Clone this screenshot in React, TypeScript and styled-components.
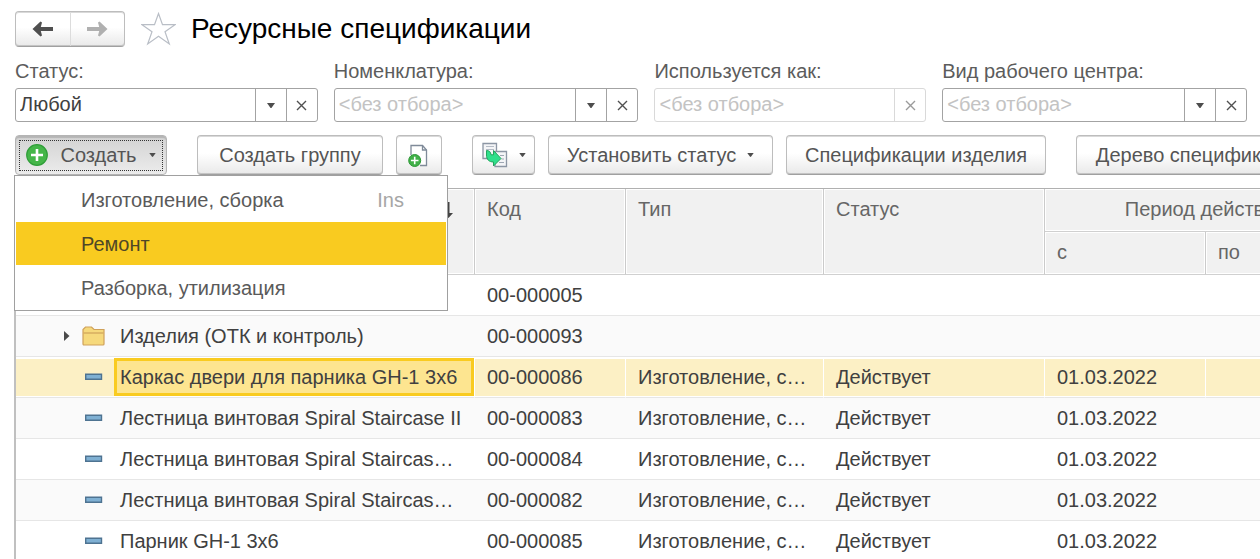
import React from 'react';
import styled, { createGlobalStyle, css } from 'styled-components';

const GlobalStyle = createGlobalStyle`
  *, *::before, *::after { box-sizing: border-box; }
  body {
    margin: 0;
    background: #fff;
    color: #4a4a4a;
    font-family: "Liberation Sans", Arial, sans-serif;
    font-size: 20px;
    line-height: 22px;
  }
  button, input, select { font: inherit; color: inherit; }
`;

const Page = styled.main`
  display: flex;
  flex-direction: column;
  height: 100vh;
  overflow: hidden;
  padding: 11px 0 0 15px;
`;

const Header = styled.header`
  display: flex;
  align-items: center;
  height: 36px;
`;

const raised = css`
  border: 1px solid #bdbdbd;
  border-bottom-color: #a0a0a0;
  border-radius: 4px;
  background: linear-gradient(#fff 0%, #fff 45%, #e9e9e9 100%);
  box-shadow: inset 0 1px 0 #d9d9d9, inset 0 -1px 0 #c4c4c4;
`;

const NavGroup = styled.nav`
  ${raised}
  display: flex;
  width: 110px;
  height: 36px;
`;

const NavButton = styled.button`
  flex: 1;
  display: flex;
  align-items: center;
  justify-content: center;
  padding: 0;
  border: 0;
  background: none;
  color: #4f4f4f;
  & + & { border-left: 1px solid #dcdcdc; }
  &:disabled { color: #b0b0b0; }
`;

const StarButton = styled.button`
  display: flex;
  margin: 0 15px 0 16px;
  padding: 0;
  border: 0;
  background: none;
`;

const Title = styled.h1`
  margin: 0;
  color: #000;
  font-size: 28px;
  line-height: 32px;
  font-weight: 400;
  white-space: nowrap;
`;

const Filters = styled.section`
  display: grid;
  grid-template-columns: 303fr 305fr 272fr 305fr;
  gap: 16px;
  margin: 14px 13px 0 0;
`;

const Field = styled.div`
  display: flex;
  flex-direction: column;
  gap: 7px;
  min-width: 0;
`;

const FieldLabel = styled.label`
  line-height: 20px;
  color: #5c5c5c;
  white-space: nowrap;
`;

const FieldBox = styled.div<{ $disabled?: boolean }>`
  --line: ${p => (p.$disabled ? '#d9d9d9' : '#a3a3a3')};
  display: grid;
  grid-template-columns: minmax(0, 1fr) ${p => (p.$disabled ? '' : '31px')} 31px;
  height: 34px;
  border: 1px solid var(--line);
  border-radius: 3px;
  background: #fff;
  color: ${p => (p.$disabled ? '#9b9b9b' : '#505050')};
`;

const FieldSelect = styled.select<{ $empty?: boolean }>`
  grid-area: 1 / 1 / 2 / 3;
  min-width: 0;
  height: 32px;
  padding: 0 35px 2px 4px;
  appearance: none;
  border: 0;
  outline: 0;
  background: none;
  color: ${p => (p.$empty ? '#c3c3c3' : '#404040')};
`;

const FieldInput = styled.input`
  min-width: 0;
  height: 32px;
  padding: 0 4px 2px;
  border: 0;
  outline: 0;
  background: none;
  &::placeholder { color: #c3c3c3; opacity: 1; }
`;

const DropMark = styled.span`
  grid-area: 1 / 2 / 2 / 3;
  display: flex;
  align-items: center;
  justify-content: center;
  border-left: 1px solid var(--line);
  pointer-events: none;
`;

const ClearButton = styled.button`
  display: flex;
  align-items: center;
  justify-content: center;
  padding: 0;
  border: 0;
  border-left: 1px solid var(--line);
  background: none;
`;

const Toolbar = styled.div`
  display: flex;
  gap: 30px;
  margin-top: 13px;
`;

const ButtonGroup = styled.div`
  position: relative;
  display: flex;
  flex: none;
  gap: 13px;
`;

const ToolButton = styled.button<{ $width: number }>`
  ${raised}
  display: flex;
  align-items: center;
  justify-content: center;
  gap: 11px;
  flex: none;
  min-width: ${p => p.$width}px;
  height: 40px;
  padding: 0;
  white-space: nowrap;
  color: #555;
`;

const CreateButton = styled(ToolButton)`
  padding: 3px;
  border-color: #b4b4b4;
  background: linear-gradient(#d2d2d2, #ececec);
  box-shadow: inset 0 2px 1px #b5b5b5;
`;

const FocusRing = styled.span`
  flex: 1;
  display: flex;
  align-items: center;
  justify-content: space-between;
  height: 31px;
  padding: 0 6px;
  border: 1px dotted #333;
`;

const Menu = styled.div`
  position: absolute;
  z-index: 2;
  top: 40px;
  left: -1px;
  display: flex;
  flex-direction: column;
  gap: 1px;
  width: 434px;
  padding: 2px 1px 1px;
  border: 1px solid #a0a0a0;
  background: #fff;
`;

const MenuItem = styled.button<{ $active?: boolean }>`
  display: flex;
  align-items: center;
  justify-content: space-between;
  height: 43px;
  padding: 0 42px 0 65px;
  border: 0;
  background: ${p => (p.$active ? '#f9cb20' : '#fff')};
  color: ${p => (p.$active ? '#4f4727' : '#5a5a5a')};
`;

const Shortcut = styled.span`
  color: #a6a6a6;
`;

const TableArea = styled.section`
  flex: 1;
  min-height: 0;
  margin: 13px 0 0 -1px;
  overflow: hidden;
  border-top: 1px solid #b0b0b0;
  border-left: 2px solid #c0c0c0;
`;

const Table = styled.table`
  width: max(100%, 1351px);
  table-layout: fixed;
  border-collapse: separate;
  border-spacing: 0;
`;

const HeadCell = styled.th<{ $center?: boolean }>`
  height: 43px;
  padding: 9px 12px 0;
  border-right: 1px solid #cbcbcb;
  border-bottom: 1px solid #d0d0d0;
  background: #f1f1f1;
  box-shadow: inset 0 0 0 1px #fff;
  color: #666;
  font-weight: 400;
  text-align: ${p => (p.$center ? 'center' : 'left')};
  vertical-align: top;
  white-space: nowrap;
`;

const SortMark = styled.span`
  display: flex;
  align-items: center;
  justify-content: flex-end;
  height: 24px;
  padding-right: 8px;
`;

const Cell = styled.td`
  height: 41px;
  padding: 0 12px;
  border-bottom: 1px solid #e6e6e6;
  color: #404040;
  overflow: hidden;
  text-overflow: ellipsis;
  white-space: nowrap;
`;

const NameCell = styled(Cell)`
  padding: 0;
`;

const Row = styled.tr<{ $selected?: boolean }>`
  &:nth-child(even) { background: #fafafa; }
  ${p => p.$selected && css`
    && { background: #fcf0c5; }
    ${Cell} {
      border-right: 1px solid #fff;
      box-shadow: inset 0 2px 0 #fff, inset 0 -1px 0 #fff;
    }
  `}
`;

const NameLine = styled.div`
  display: flex;
  align-items: center;
`;

const Marker = styled.span`
  flex: none;
  display: flex;
  align-items: center;
  justify-content: flex-end;
  gap: 12px;
  width: 98px;
  padding-right: 9px;
`;

const NameText = styled.span<{ $focused?: boolean }>`
  flex: 1;
  min-width: 0;
  height: 38px;
  padding: 5px 3px 0;
  border: 3px solid ${p => (p.$focused ? '#f9cb20' : 'transparent')};
  background: ${p => (p.$focused ? '#fde590' : 'none')};
  overflow: hidden;
  text-overflow: ellipsis;
`;

const Caret = ({ small }: { small?: boolean }) => (
  <svg width={small ? 7 : 8} height={small ? 4 : 5} viewBox="0 0 8 5" aria-hidden="true">
    <path d="M0 0h8L4.8 4.4a1 1 0 0 1-1.6 0z" fill="#4d4d4d" />
  </svg>
);

const Cross = () => (
  <svg width="11" height="11" viewBox="0 0 11 11" aria-hidden="true">
    <path d="M1 1l9 9M10 1l-9 9" stroke="currentColor" strokeWidth="1.4" />
  </svg>
);

const Arrow = ({ flip }: { flip?: boolean }) => (
  <svg width="22" height="16" viewBox="0 0 22 16" aria-hidden="true">
    <path
      d="M.5 8L8.500 .5l1.500 1L8.800 6H21V10H8.800L10 14.500l-1.500 1z"
      fill="currentColor"
      transform={flip ? 'matrix(-1 0 0 1 22 0)' : undefined}
    />
  </svg>
);

const Star = () => (
  <svg width="35" height="34" viewBox="0 0 35 34" aria-hidden="true">
    <path
      d="M17.500 1.500l4 11.200H34L24 19.800l4.300 12.200-10.800-7.700-10.800 7.700L11 19.800 1 12.700h12.500z"
      fill="#fff"
      stroke="#b9bec6"
      strokeWidth="1.200"
    />
  </svg>
);

const Plus = () => (
  <svg width="22" height="22" viewBox="0 0 22 22" aria-hidden="true">
    <circle cx="11" cy="11" r="10.300" fill="#45b649" stroke="#2f9e38" strokeWidth="1.200" />
    <path d="M11 5v12M5 11h12" stroke="#fff" strokeWidth="2.600" />
  </svg>
);

const NewDoc = () => (
  <svg width="22" height="26" viewBox="0 0 22 26" aria-hidden="true">
    <path d="M3 13V3.500h11.500l4 4.500v15.500H12" fill="#fff" stroke="#7f8a99" strokeWidth="1.300" />
    <path d="M14.500 3.500V8h4" fill="none" stroke="#7f8a99" strokeWidth="1.300" />
    <circle cx="6.700" cy="18.500" r="6" fill="#41b048" stroke="#2c9836" />
    <path d="M6.700 14.700v7.600M2.900 18.500h7.600" stroke="#fff" strokeWidth="1.600" />
  </svg>
);

const CopyDoc = () => (
  <svg width="26" height="26" viewBox="0 0 26 26" aria-hidden="true">
    <path d="M1 1.500h13.500v15H1z" fill="#f4f5f7" stroke="#8c96a4" strokeWidth="1.300" />
    <path d="M4 4.500h8M4 7.500h8" stroke="#b5bcc6" />
    <path d="M13 9.500h11.500v15H13z" fill="#f4f5f7" stroke="#8c96a4" strokeWidth="1.300" />
    <path d="M18 13.500h4M19.500 17h2.500M17 20.500h5" stroke="#9ea7b3" />
    <path
      d="M4.500 8.500c2.800 0 4.200 1.500 4.500 4.300h2.500V8.500L19 16.500l-7.500 7.500V20C7 20 4.500 17.500 4.500 13z"
      fill="#2fdf8b"
      stroke="#22a45c"
    />
  </svg>
);

const Folder = () => (
  <svg width="23" height="20" viewBox="0 0 23 20" aria-hidden="true">
    <path d="M1 18V3.500L3.500 1h6L12 3.500h10V18a1 1 0 0 1-1 1H2a1 1 0 0 1-1-1z" fill="#f6d97c" stroke="#cfa15a" strokeWidth="1.200" />
    <path d="M1.500 7h20" stroke="#cfa15a" strokeWidth="1.200" />
  </svg>
);

const Expander = () => (
  <svg width="6" height="10" viewBox="0 0 6 10" aria-hidden="true">
    <path d="M0 0l5.500 5L0 10z" fill="#4a4a4a" />
  </svg>
);

const Dash = () => (
  <svg width="20" height="8" viewBox="0 0 20 8" aria-hidden="true">
    <path d="M.7 1.200h15.800v5H.7z" fill="#7fb0d3" stroke="#4e7391" strokeWidth="1.400" />
  </svg>
);

const SortArrow = () => (
  <svg width="11" height="16" viewBox="0 0 11 16" aria-hidden="true">
    <path d="M4.500 0h2v11H10L5.500 16 1 11h3.500z" fill="#444" />
  </svg>
);

type Filter = { id: string; label: string; value: string; empty?: boolean; disabled?: boolean };

const filters: Filter[] = [
  { id: 'status', label: 'Статус:', value: 'Любой' },
  { id: 'item', label: 'Номенклатура:', value: '<без отбора>', empty: true },
  { id: 'usage', label: 'Используется как:', value: '<без отбора>', disabled: true },
  { id: 'center', label: 'Вид рабочего центра:', value: '<без отбора>', empty: true },
];

type Spec = { kind: 'none' | 'folder' | 'item'; name: string; code: string; selected?: boolean };

const specs: Spec[] = [
  { kind: 'none', name: '', code: '00-000005' },
  { kind: 'folder', name: 'Изделия (ОТК и контроль)', code: '00-000093' },
  { kind: 'item', name: 'Каркас двери для парника GH-1 3х6', code: '00-000086', selected: true },
  { kind: 'item', name: 'Лестница винтовая Spiral Staircase II', code: '00-000083' },
  { kind: 'item', name: 'Лестница винтовая Spiral Staircas…', code: '00-000084' },
  { kind: 'item', name: 'Лестница винтовая Spiral Staircas…', code: '00-000082' },
  { kind: 'item', name: 'Парник GH-1 3х6', code: '00-000085' },
];

function FilterField({ id, label, value, empty, disabled }: Filter) {
  return (
    <Field>
      <FieldLabel htmlFor={id}>{label}</FieldLabel>
      <FieldBox $disabled={disabled}>
        {disabled ? (
          <FieldInput id={id} placeholder={value} disabled />
        ) : (
          <>
            <FieldSelect id={id} $empty={empty}>
              <option>{value}</option>
            </FieldSelect>
            <DropMark><Caret /></DropMark>
          </>
        )}
        <ClearButton type="button" aria-label="Очистить" disabled={disabled}><Cross /></ClearButton>
      </FieldBox>
    </Field>
  );
}

function SpecRow({ kind, name, code, selected }: Spec) {
  const item = kind === 'item';
  return (
    <Row $selected={selected} aria-selected={selected}>
      <NameCell>
        <NameLine>
          <Marker>
            {kind === 'folder' && <><Expander /><Folder /></>}
            {item && <Dash />}
          </Marker>
          <NameText $focused={selected}>{name}</NameText>
        </NameLine>
      </NameCell>
      <Cell>{code}</Cell>
      <Cell>{item && 'Изготовление, сборка'}</Cell>
      <Cell>{item && 'Действует'}</Cell>
      <Cell>{item && '01.03.2022'}</Cell>
      <Cell />
    </Row>
  );
}

export default function App() {
  return (
    <>
      <GlobalStyle />
      <Page>
        <Header>
          <NavGroup>
            <NavButton type="button" aria-label="Назад"><Arrow /></NavButton>
            <NavButton type="button" aria-label="Вперед" disabled><Arrow flip /></NavButton>
          </NavGroup>
          <StarButton type="button" aria-label="В избранное"><Star /></StarButton>
          <Title>Ресурсные спецификации</Title>
        </Header>

        <Filters>
          {filters.map(f => <FilterField key={f.id} {...f} />)}
        </Filters>

        <Toolbar>
          <ButtonGroup>
            <CreateButton type="button" $width={152} aria-haspopup="menu" aria-expanded="true">
              <FocusRing><Plus />Создать<Caret small /></FocusRing>
            </CreateButton>
            <Menu role="menu">
              <MenuItem type="button" role="menuitem">Изготовление, сборка<Shortcut>Ins</Shortcut></MenuItem>
              <MenuItem type="button" role="menuitem" $active>Ремонт</MenuItem>
              <MenuItem type="button" role="menuitem">Разборка, утилизация</MenuItem>
            </Menu>
          </ButtonGroup>
          <ButtonGroup>
            <ToolButton type="button" $width={186}>Создать группу</ToolButton>
            <ToolButton type="button" $width={46} aria-label="Создать копированием"><NewDoc /></ToolButton>
          </ButtonGroup>
          <ButtonGroup>
            <ToolButton type="button" $width={63} aria-label="Создать на основании"><CopyDoc /><Caret small /></ToolButton>
            <ToolButton type="button" $width={225}>Установить статус<Caret small /></ToolButton>
            <ToolButton type="button" $width={260}>Спецификации изделия</ToolButton>
          </ButtonGroup>
          <ButtonGroup>
            <ToolButton type="button" $width={250}>Дерево спецификаций</ToolButton>
          </ButtonGroup>
        </Toolbar>

        <TableArea>
          <Table>
            <colgroup>
              <col width="459" />
              <col width="151" />
              <col width="198" />
              <col width="221" />
              <col width="161" />
              <col width="161" />
            </colgroup>
            <thead>
              <tr>
                <HeadCell rowSpan={2} aria-sort="ascending"><SortMark><SortArrow /></SortMark></HeadCell>
                <HeadCell rowSpan={2}>Код</HeadCell>
                <HeadCell rowSpan={2}>Тип</HeadCell>
                <HeadCell rowSpan={2}>Статус</HeadCell>
                <HeadCell colSpan={2} $center>Период действия</HeadCell>
              </tr>
              <tr>
                <HeadCell>с</HeadCell>
                <HeadCell>по</HeadCell>
              </tr>
            </thead>
            <tbody>
              {specs.map(s => <SpecRow key={s.code} {...s} />)}
            </tbody>
          </Table>
        </TableArea>
      </Page>
    </>
  );
}
